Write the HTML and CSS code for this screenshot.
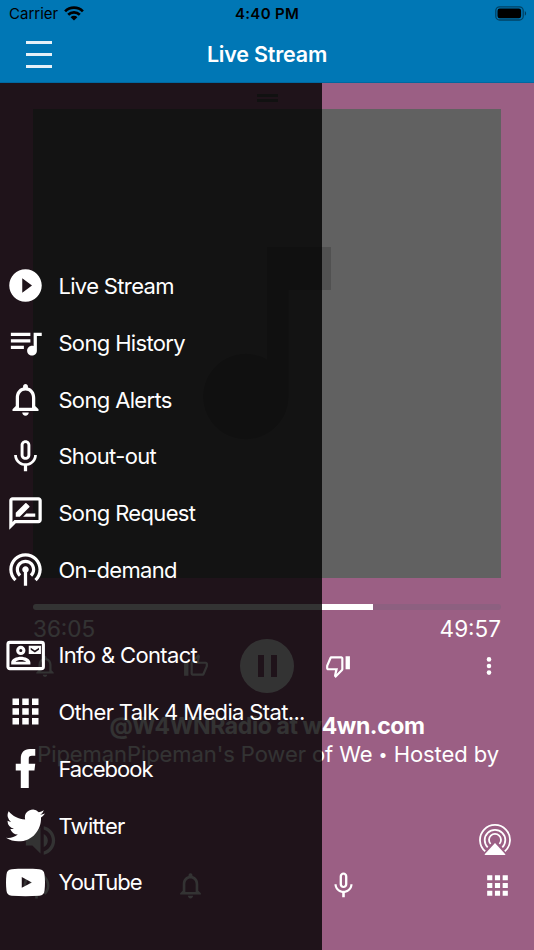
FILE: index.html
```html
<!DOCTYPE html>
<html lang="en">
<head>
<meta charset="utf-8">
<title>Live Stream</title>
<link rel="stylesheet" href="styles.css">
</head>
<body>
<svg class="defs" aria-hidden="true">
  <symbol id="bell" viewBox="0 0 24 24"><path d="M12 22c1.1 0 2-.9 2-2h-4c0 1.1.9 2 2 2zm6-6v-5c0-3.07-1.63-5.64-4.5-6.32V4c0-.83-.67-1.5-1.5-1.5s-1.5.67-1.5 1.5v.68C7.64 5.36 6 7.92 6 11v5l-2 2v1h16v-1l-2-2zm-2 1H8v-6c0-2.48 1.51-4.5 4-4.5s4 2.02 4 4.5v6z"/></symbol>
  <symbol id="mic" viewBox="0 0 24 24"><path d="M12 14c1.66 0 2.99-1.34 2.99-3L15 5c0-1.66-1.34-3-3-3S9 3.34 9 5v6c0 1.66 1.34 3 3 3zm-1.2-9.1c0-.66.54-1.2 1.2-1.2.66 0 1.2.54 1.2 1.2l-.01 6.2c0 .66-.53 1.2-1.19 1.2-.66 0-1.2-.54-1.2-1.2V4.9zm6.5 6.1c0 3-2.54 5.1-5.3 5.1S6.7 14 6.7 11H5c0 3.41 2.72 6.23 6 6.72V21h2v-3.28c3.28-.48 6-3.3 6-6.72h-1.7z"/></symbol>
  <symbol id="apps" viewBox="0 0 24 24"><path d="M4 8h4V4H4v4zm6 12h4v-4h-4v4zm-6 0h4v-4H4v4zm0-6h4v-4H4v4zm6 0h4v-4h-4v4zm6-10v4h4V4h-4zm-6 4h4V4h-4v4zm6 6h4v-4h-4v4zm0 6h4v-4h-4v4z"/></symbol>
  <symbol id="thumb" viewBox="0 0 24 24"><path d="M9 21h9c.83 0 1.54-.5 1.84-1.22l3.02-7.05c.09-.23.14-.47.14-.73v-2c0-1.1-.9-2-2-2h-6.31l.95-4.57.03-.32c0-.41-.17-.79-.44-1.06L14.17 1 7.58 7.59C7.22 7.95 7 8.45 7 9v10c0 1.1.9 2 2 2zM9 9l4.34-4.34L12 10h9v2l-3 7H9V9zM1 9h4v12H1z"/></symbol>
  <symbol id="volume" viewBox="0 0 24 24"><path d="M3 9v6h4l5 5V4L7 9H3zm13.5 3c0-1.77-1.02-3.29-2.5-4.03v8.05c1.48-.73 2.5-2.25 2.5-4.02zM14 3.23v2.06c2.89.86 5 3.54 5 6.71s-2.11 5.85-5 6.71v2.06c4.01-.91 7-4.49 7-8.77s-2.99-7.86-7-8.77z"/></symbol>
  <symbol id="play" viewBox="0 0 24 24"><path d="M12 2C6.48 2 2 6.48 2 12s4.48 10 10 10 10-4.48 10-10S17.52 2 12 2zm-2 14.5v-9l6 4.5-6 4.5z"/></symbol>
  <symbol id="podcast" viewBox="0 0 24 24"><path d="M14 12c0 .74-.4 1.38-1 1.72V22h-2v-8.28c-.6-.35-1-.98-1-1.72 0-1.1.9-2 2-2s2 .9 2 2zm-2-6c-3.31 0-6 2.69-6 6 0 1.74.75 3.31 1.94 4.4l1.42-1.42C8.53 14.25 8 13.19 8 12c0-2.21 1.79-4 4-4s4 1.79 4 4c0 1.19-.53 2.25-1.36 2.98l1.42 1.42C17.25 15.31 18 13.74 18 12c0-3.31-2.69-6-6-6zm0-4C6.48 2 2 6.48 2 12c0 2.85 1.2 5.41 3.11 7.24l1.42-1.42C4.98 16.36 4 14.29 4 12c0-4.41 3.59-8 8-8s8 3.59 8 8c0 2.29-.98 4.36-2.53 5.82l1.42 1.42C20.8 17.41 22 14.85 22 12c0-5.52-4.48-10-10-10z"/></symbol>
</svg>

<div class="app">
  <header class="header">
    <div class="status">
      <div class="carrier"><span>Carrier</span>
        <svg class="wifi" viewBox="0 0 20 15"><g fill="none" stroke="#000" stroke-width="2.7"><path d="M1.1 5.4a12.6 12.6 0 0 1 17.8 0"/><path d="M4.2 8.7a8.2 8.2 0 0 1 11.6 0"/></g><path d="M6.6 11.2a4.8 4.8 0 0 1 6.8 0L10 14.6z"/></svg>
      </div>
      <time class="clock">4:40 PM</time>
      <div class="power"><svg class="battery" viewBox="0 0 32 15"><rect x=".8" y=".8" width="27.4" height="13.2" rx="3.8" fill="none" stroke="#000" stroke-opacity=".45" stroke-width="1.3"/><rect x="2.5" y="2.5" width="23.6" height="9.8" rx="2.2"/><path d="M29.8 5v4.8c1.8-.9 1.8-3.9 0-4.8z" opacity=".5"/></svg></div>
    </div>
    <div class="navbar">
      <button class="burger" aria-label="Menu"><i></i><i></i><i></i></button>
      <h1>Live Stream</h1>
      <span></span>
    </div>
  </header>

  <main class="stage">
    <section class="player">
      <div class="handle"><i></i><i></i></div>
      <div class="cover"><svg viewBox="0 0 128 193"><path d="M64 0h64v43H85.500V150A42.700 42.700 0 1 1 64 112.500z"/></svg></div>
      <div class="track"><div class="played"></div></div>
      <div class="times"><span>36:05</span><span>49:57</span></div>
      <div class="controls">
        <svg class="ic"><use href="#bell"/></svg>
        <div class="vote">
          <svg class="ic"><use href="#thumb"/></svg>
          <div class="pause"><i></i><i></i></div>
          <svg class="ic down"><use href="#thumb"/></svg>
        </div>
        <svg class="ic" viewBox="0 0 24 24"><circle cx="12" cy="5.900" r="2.100"/><circle cx="12" cy="12" r="2.100"/><circle cx="12" cy="18.100" r="2.100"/></svg>
      </div>
      <div class="title">@W4WNRadio at w4wn.com</div>
      <div class="subtitle"><span>Pipeman</span><span>Pipeman's Power of We <b>•</b> Hosted by</span></div>
      <div class="output">
        <svg class="vol"><use href="#volume"/></svg>
        <svg class="airplay" viewBox="0 0 32 32"><g fill="none" stroke="#fff" stroke-width="1.800"><path d="M6.200 27.300A15 15 0 1 1 25.800 27.300"/><path d="M8.700 23.400A10.300 10.300 0 1 1 23.300 23.400"/><path d="M11.600 20A6 6 0 1 1 20.400 20"/></g><path d="M16 19 26.300 30.200q.3.800-.6.800H6.300q-.9 0-.6-.8z"/></svg>
      </div>
      <div class="tabs">
        <svg class="tab"><use href="#podcast"/></svg>
        <svg class="tab"><use href="#bell"/></svg>
        <svg class="tab"><use href="#mic"/></svg>
        <svg class="tab"><use href="#apps"/></svg>
      </div>
    </section>

    <nav class="drawer">
      <a><svg><use href="#play"/></svg><span>Live Stream</span></a>
      <a><svg viewBox="0 0 24 24"><path d="M15 6H3v2h12V6zm0 4H3v2h12v-2zM3 16h8v-2H3v2zM17 6v8.180c-.31-.11-.65-.18-1-.18-1.660 0-3 1.340-3 3s1.340 3 3 3 3-1.340 3-3V8h3V6h-5z"/></svg><span>Song History</span></a>
      <a><svg><use href="#bell"/></svg><span>Song Alerts</span></a>
      <a><svg><use href="#mic"/></svg><span>Shout-out</span></a>
      <a><svg viewBox="0 0 24 24"><path d="M20 2H4c-1.100 0-1.990.9-1.990 2L2 22l4-4h14c1.100 0 2-.9 2-2V4c0-1.100-.9-2-2-2zm0 14H5.170L4 17.170V4h16v12zM10.500 14H18v-2h-5.500zM6 14h2.470l5.880-5.880c.2-.2.2-.51 0-.71l-1.770-1.770c-.2-.2-.51-.2-.71 0L6 11.530V14z"/></svg><span>Song Request</span></a>
      <a><svg><use href="#podcast"/></svg><span>On-demand</span></a>
      <a class="group"><svg viewBox="0 0 24 24"><rect x="1.200" y="3.900" width="21.800" height="16.200" rx="1.200" fill="none" stroke="#fff" stroke-width="1.900"/><circle cx="9.100" cy="8.900" r="1.900" fill="none" stroke="#fff" stroke-width="1.900"/><path fill-rule="evenodd" d="M3.200 17.500v-1.300c0-2.200 3.400-3.500 5.900-3.500s5.900 1.300 5.900 3.500v1.300zM5.800 15.800h6.600c-.8-.7-2-1.100-3.300-1.100s-2.500.4-3.300 1.100zM14 6h7.500v5H14zm1.200 1.200v1.300l2.550 1.700 2.550-1.700V7.200l-2.550 1.700z"/></svg><span>Info &amp; Contact</span></a>
      <a><svg><use href="#apps"/></svg><span>Other Talk 4 Media Stat...</span></a>
      <a class="brand"><svg viewBox="0 0 24 24"><path d="M9.100 24V13.300H6V9.100h3.100V6c0-3.800 2-6 5.600-6H18v4.100h-2c-1.600 0-2 .7-2 2v3h4l-.5 4.200H14V24z"/></svg><span>Facebook</span></a>
      <a><svg viewBox="0 0 24 24"><path d="M23.950 4.570a10 10 0 0 1-2.820.77 4.960 4.960 0 0 0 2.160-2.720c-.95.550-2 .950-3.130 1.180a4.920 4.920 0 0 0-8.380 4.480C7.690 8.100 4.070 6.130 1.640 3.160a4.930 4.930 0 0 0 1.520 6.570 4.900 4.900 0 0 1-2.230-.61v.06a4.920 4.920 0 0 0 3.950 4.830 5 5 0 0 1-2.210.08 4.940 4.940 0 0 0 4.600 3.420A9.870 9.870 0 0 1 0 19.540a14 14 0 0 0 7.550 2.210c9.050 0 14-7.500 14-13.980 0-.21 0-.42-.02-.63a9.940 9.940 0 0 0 2.460-2.550z"/></svg><span>Twitter</span></a>
      <a class="brand"><svg viewBox="0 0 24 24"><path fill-rule="evenodd" d="M12 3.600c3.200 0 6 .1 8.500.3 2 .2 3 1.200 3.200 3.100.4 3.300.4 6.700 0 10-.2 1.900-1.200 2.900-3.200 3.100-5.700.4-11.300.4-17 0-2-.2-3-1.200-3.200-3.100-.4-3.300-.4-6.700 0-10 .2-1.900 1.200-2.900 3.200-3.100 2.500-.2 5.300-.3 8.500-.3zM9.700 8.600v6.700l6.200-3.300z"/></svg><span>YouTube</span></a>
    </nav>
  </main>
</div>
</body>
</html>
```
FILE: styles.css
```css
* { box-sizing: border-box; }
body { margin: 0; font-family: Inter, "Liberation Sans", sans-serif; color: #fff; }
.defs { display: none; }
svg { fill: #fff; display: block; flex: none; }
.app { width: 534px; height: 950px; display: flex; flex-direction: column; overflow: hidden; background: #9b5f84; }

.header { height: 83px; background: #0077b5; border-bottom: 1px solid #0068a0; }
.status { height: 27px; padding: 0 8px 0 9px; display: grid; grid-template-columns: 1fr auto 1fr; align-items: center; color: #000; font-size: 15px; }
.status svg { fill: #000; }
.carrier { display: flex; align-items: center; gap: 6px; }
.wifi { width: 20px; height: 15px; }
.clock { font-weight: 600; letter-spacing: .3px; margin-left: -1px; }
.power { justify-self: end; margin-right: -1px; }
.battery { width: 32px; height: 15px; }
.navbar { height: 54px; padding: 0 26px; display: grid; grid-template-columns: 1fr auto 1fr; align-items: center; }
.navbar h1 { margin: 0; font-size: 21.500px; font-weight: 600; letter-spacing: -.2px; }
.burger { width: 26px; padding: 0; border: 0; background: none; display: flex; flex-direction: column; gap: 9px; }
.burger i { height: 3px; background: #e6f1f8; }

.stage { position: relative; flex: 1; }
.player { height: 867px; padding: 0 33px; display: flex; flex-direction: column; }
.handle { height: 26px; padding-top: 11px; display: flex; flex-direction: column; align-items: center; gap: 2px; }
.handle i { width: 21px; height: 3px; background: #585858; }
.cover { height: 469.400px; background: #616161; display: flex; align-items: center; justify-content: center; }
.cover svg { width: 128px; height: 193px; fill: #515151; }
.track { margin-top: 25.600px; height: 6px; border-radius: 3px; background: #8d6080; overflow: hidden; }
.played { width: 340px; height: 6px; background: #fff; }
.times { height: 36px; padding-top: 5px; display: flex; justify-content: space-between; font-size: 22.500px; line-height: 28px; }
.controls { height: 40px; margin: 0 -1px; display: flex; align-items: center; justify-content: space-between; }
.vote { display: flex; align-items: center; gap: 31px; }
.ic { width: 26px; height: 26px; }
.down { transform: rotate(180deg); }
.pause { width: 54px; height: 54px; border-radius: 50%; background: #fff; display: flex; align-items: center; justify-content: center; gap: 7px; }
.pause i { width: 6px; height: 22.500px; background: #9b5f84; }
.title { margin-top: 26px; text-align: center; font-size: 23px; font-weight: 700; line-height: 28px; letter-spacing: -.4px; }
.subtitle { height: 28px; margin-right: 2px; display: flex; justify-content: flex-end; white-space: nowrap; font-size: 22px; line-height: 28px; letter-spacing: -.08px; }
.subtitle b { display: inline-block; width: 9px; font-size: 16px; font-weight: 400; line-height: 20px; text-align: center; vertical-align: 2px; }
.output { margin: 36.300px -10px 0 -12px; height: 72px; display: flex; align-items: center; justify-content: space-between; }
.vol { width: 39px; height: 39px; }
.airplay { width: 32px; height: 32px; }
.tabs { margin: -6px -12px 0; display: flex; justify-content: space-between; }
.tab { width: 31px; height: 31px; }

.drawer { position: absolute; left: 0; top: 0; width: 322.400px; height: 867px; padding: 0 6px 39.300px 6.400px; background: rgba(0, 0, 0, .8); display: flex; flex-direction: column; justify-content: flex-end; }
.drawer a { height: 56.800px; display: flex; align-items: center; gap: 13px; white-space: nowrap; font-size: 22px; letter-spacing: -.65px; }
.drawer a svg { width: 39px; height: 39px; }
.drawer .group { margin-top: 28.400px; }
.drawer .brand { letter-spacing: -1px; }
```
